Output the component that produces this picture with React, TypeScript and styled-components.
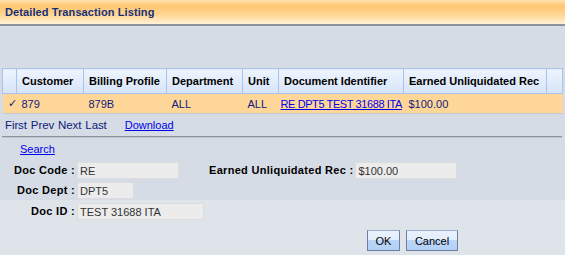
import React from "react";
import styled, { createGlobalStyle } from "styled-components";

const GlobalStyle = createGlobalStyle`
  html, body {
    margin: 0;
    padding: 0;
    background: #d5dce5;
    font-family: "Liberation Sans", Arial, sans-serif;
    font-size: 11px;
  }
`;

const columns = [
  { label: "", width: 14 },
  { label: "Customer", width: 67 },
  { label: "Billing Profile", width: 83 },
  { label: "Department", width: 76 },
  { label: "Unit", width: 36 },
  { label: "Document Identifier", width: 125 },
  { label: "Earned Unliquidated Rec", width: 143 },
  { label: "", width: 16 },
];

export default function App() {
  return (
    <>
      <GlobalStyle />
      <Page>
        <TitleBar>Detailed Transaction Listing</TitleBar>
        <Body>
          <Grid>
            <colgroup>
              {columns.map((c, i) => (
                <col key={i} style={{ width: c.width }} />
              ))}
            </colgroup>
            <thead>
              <tr>
                {columns.map((c, i) => (
                  <HeadCell key={i}>{c.label}</HeadCell>
                ))}
              </tr>
            </thead>
            <tbody>
              <tr>
                <DataCell $center>✓</DataCell>
                <DataCell>879</DataCell>
                <DataCell>879B</DataCell>
                <DataCell>ALL</DataCell>
                <DataCell>ALL</DataCell>
                <DataCell $tight>
                  <DocLink href="#">RE DPT5 TEST 31688 ITA</DocLink>
                </DataCell>
                <DataCell>$100.00</DataCell>
                <DataCell />
              </tr>
            </tbody>
          </Grid>
          <Pager>
            <span>First</span>
            <span>Prev</span>
            <span>Next</span>
            <span>Last</span>
            <DownloadLink href="#">Download</DownloadLink>
          </Pager>
          <Divider />
          <SearchRow>
            <Link href="#">Search</Link>
          </SearchRow>
          <FormRow>
            <Label>Doc Code :</Label>
            <Field $w={102}>RE</Field>
            <WideLabel>Earned Unliquidated Rec :</WideLabel>
            <Field $w={102}>$100.00</Field>
          </FormRow>
          <FormRow>
            <Label>Doc Dept :</Label>
            <Field $w={57}>DPT5</Field>
          </FormRow>
        </Body>
        <Footer>
          <FormRow>
            <Label>Doc ID :</Label>
            <Field $w={127}>TEST 31688 ITA</Field>
          </FormRow>
          <Buttons>
            <Button style={{ width: 33 }}>OK</Button>
            <Button style={{ width: 52 }}>Cancel</Button>
          </Buttons>
        </Footer>
      </Page>
    </>
  );
}

const Page = styled.div`
  width: 565px;
  height: 255px;
  display: flex;
  flex-direction: column;
  overflow: hidden;
`;

const TitleBar = styled.div`
  height: 24px;
  padding-left: 5px;
  display: flex;
  align-items: center;
  font-size: 11px;
  font-weight: bold;
  letter-spacing: 0.1px;
  color: #16307a;
  background: linear-gradient(
    to bottom,
    #ffe2ad 0%,
    #ffc570 25%,
    #ffd592 60%,
    #fff1d6 100%
  );
  border-bottom: 2px solid #8e939b;
`;

const Body = styled.div`
  padding: 41px 3px 0 2px;
  background: #d5dce5;
`;

const Grid = styled.table`
  border-collapse: collapse;
  table-layout: fixed;
  width: 560px;
  margin-top: 1px;
`;

const HeadCell = styled.th`
  height: 24px;
  padding: 0 5px;
  text-align: left;
  font-weight: bold;
  color: #000;
  white-space: nowrap;
  border: 1px solid #a9c4ec;
  background: linear-gradient(to bottom, #eef4fd 0%, #e2ecfb 50%, #d6e4f8 100%);
`;

const DataCell = styled.td<{ $center?: boolean; $tight?: boolean }>`
  height: 19px;
  padding: ${(p) => (p.$tight ? "0 2px" : "0 5px")};
  text-align: ${(p) => (p.$center ? "center" : "left")};
  color: #10207c;
  white-space: nowrap;
  overflow: hidden;
  background: #fed798;
  border-top: 1px solid #a9c4ec;
  border-bottom: 1px solid #c3cad4;
`;

const Link = styled.a`
  color: #0000ee;
  text-decoration: underline;
`;

const DocLink = styled(Link)`
  letter-spacing: -0.4px;
`;

const Pager = styled.div`
  height: 22px;
  display: flex;
  align-items: center;
  gap: 4px;
  padding-left: 3px;
  color: #10207c;
  font-size: 11.5px;
  letter-spacing: -0.1px;
`;

const DownloadLink = styled(Link)`
  margin-left: 14px;
  font-size: 11px;
  letter-spacing: 0;
`;

const Divider = styled.div`
  height: 1px;
  border-top: 1px solid #8c9096;
  background: #c2c8d0;
`;

const SearchRow = styled.div`
  height: 22px;
  padding-left: 18px;
  display: flex;
  align-items: center;
`;

const FormRow = styled.div`
  height: 20px;
  display: flex;
  align-items: center;
`;

const Label = styled.div`
  width: 73px;
  text-align: right;
  font-weight: bold;
  letter-spacing: 0.3px;
  color: #000;
  padding-right: 2px;
`;

const WideLabel = styled(Label)`
  width: auto;
  margin-left: 30px;
  padding-right: 2px;
`;

const Field = styled.div<{ $w: number }>`
  width: ${(p) => p.$w}px;
  height: 17px;
  box-sizing: border-box;
  padding: 1px 2px 0;
  display: flex;
  align-items: center;
  background: #ececec;
  border: 1px solid #dcdcdc;
  color: #333;
`;

const Footer = styled.div`
  flex: 1;
  padding: 1px 3px 0 2px;
  background: #dfe4eb;
`;

const Buttons = styled.div`
  display: flex;
  justify-content: flex-end;
  gap: 6px;
  padding: 9px 104px 0 0;
`;

const Button = styled.button`
  height: 21px;
  padding: 0;
  font-family: "Liberation Sans", Arial, sans-serif;
  font-size: 11px;
  color: #000;
  border: 1px solid #6d7f9e;
  border-top-color: #9aaccb;
  background: linear-gradient(to bottom, #e9f2fe 0%, #e3eefc 45%, #bcd6f8 50%, #b4d0f6 100%);
`;
